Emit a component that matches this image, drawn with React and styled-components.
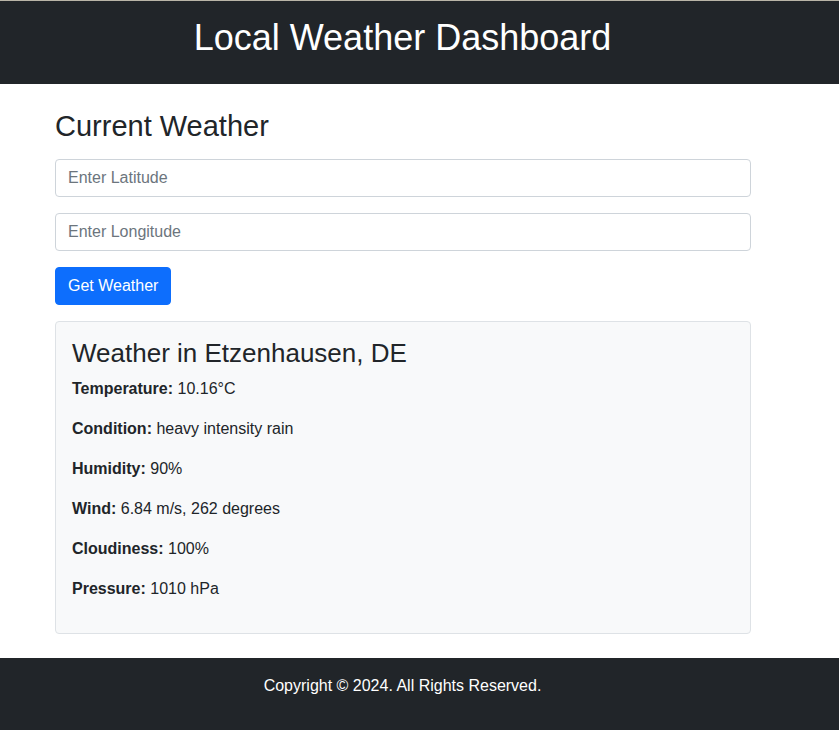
import React from 'react';
import styled, { createGlobalStyle } from 'styled-components';

const GlobalStyle = createGlobalStyle`
  *, *::before, *::after { box-sizing: border-box; }
  body {
    margin: 0;
    background: #fff;
    color: #212529;
    font: 400 16px/24px "Liberation Sans", Arial, sans-serif;
  }
`;

const Header = styled.header`
  padding: 16px 34px 26px 0;
  border-top: 1px solid #b9b5a7;
  background: #212529;
  color: #fff;
  text-align: center;
`;

const Title = styled.h1`
  margin: 0;
  font-size: 36px;
  line-height: 41px;
  font-weight: 400;
`;

const Main = styled.main`
  padding: 24px 88px 24px 55px;
`;

const Heading = styled.h2`
  margin: 0 0 14px;
  font-size: 29px;
  line-height: 37px;
  font-weight: 400;
`;

const Form = styled.form`
  display: flex;
  flex-direction: column;
  align-items: flex-start;
  gap: 16px;
`;

const Field = styled.input`
  width: 100%;
  height: 38px;
  padding: 6px 12px;
  border: 1px solid #ced4da;
  border-radius: 4px;
  background: #fff;
  color: #212529;
  font: inherit;
  &::placeholder { color: #6c757d; opacity: 1; }
`;

const SubmitButton = styled.button`
  padding: 6px 12px;
  border: 1px solid #0d6efd;
  border-radius: 4px;
  background: #0d6efd;
  color: #fff;
  font: inherit;
  cursor: pointer;
`;

const Card = styled.section`
  margin-top: 16px;
  padding: 16px;
  border: 1px solid #dee2e6;
  border-radius: 4px;
  background: #f8f9fa;
`;

const Place = styled.h3`
  margin: 0 0 8px;
  font-size: 26px;
  line-height: 31px;
  font-weight: 400;
`;

const Reading = styled.p`
  margin: 0 0 16px;
`;

const Footer = styled.footer`
  padding: 16px 34px 32px 0;
  background: #212529;
  color: #fff;
  text-align: center;
`;

const Copyright = styled.p`
  margin: 0;
`;

const readings = [
  ['Temperature', '10.16°C'],
  ['Condition', 'heavy intensity rain'],
  ['Humidity', '90%'],
  ['Wind', '6.84 m/s, 262 degrees'],
  ['Cloudiness', '100%'],
  ['Pressure', '1010 hPa'],
];

export default function App() {
  return (
    <>
      <GlobalStyle />
      <Header>
        <Title>Local Weather Dashboard</Title>
      </Header>
      <Main>
        <Heading>Current Weather</Heading>
        <Form onSubmit={(event) => event.preventDefault()}>
          <Field type="text" aria-label="Latitude" placeholder="Enter Latitude" />
          <Field type="text" aria-label="Longitude" placeholder="Enter Longitude" />
          <SubmitButton type="submit">Get Weather</SubmitButton>
        </Form>
        <Card>
          <Place>Weather in Etzenhausen, DE</Place>
          {readings.map(([label, value]) => (
            <Reading key={label}>
              <strong>{label}:</strong> {value}
            </Reading>
          ))}
        </Card>
      </Main>
      <Footer>
        <Copyright>Copyright © 2024. All Rights Reserved.</Copyright>
      </Footer>
    </>
  );
}
